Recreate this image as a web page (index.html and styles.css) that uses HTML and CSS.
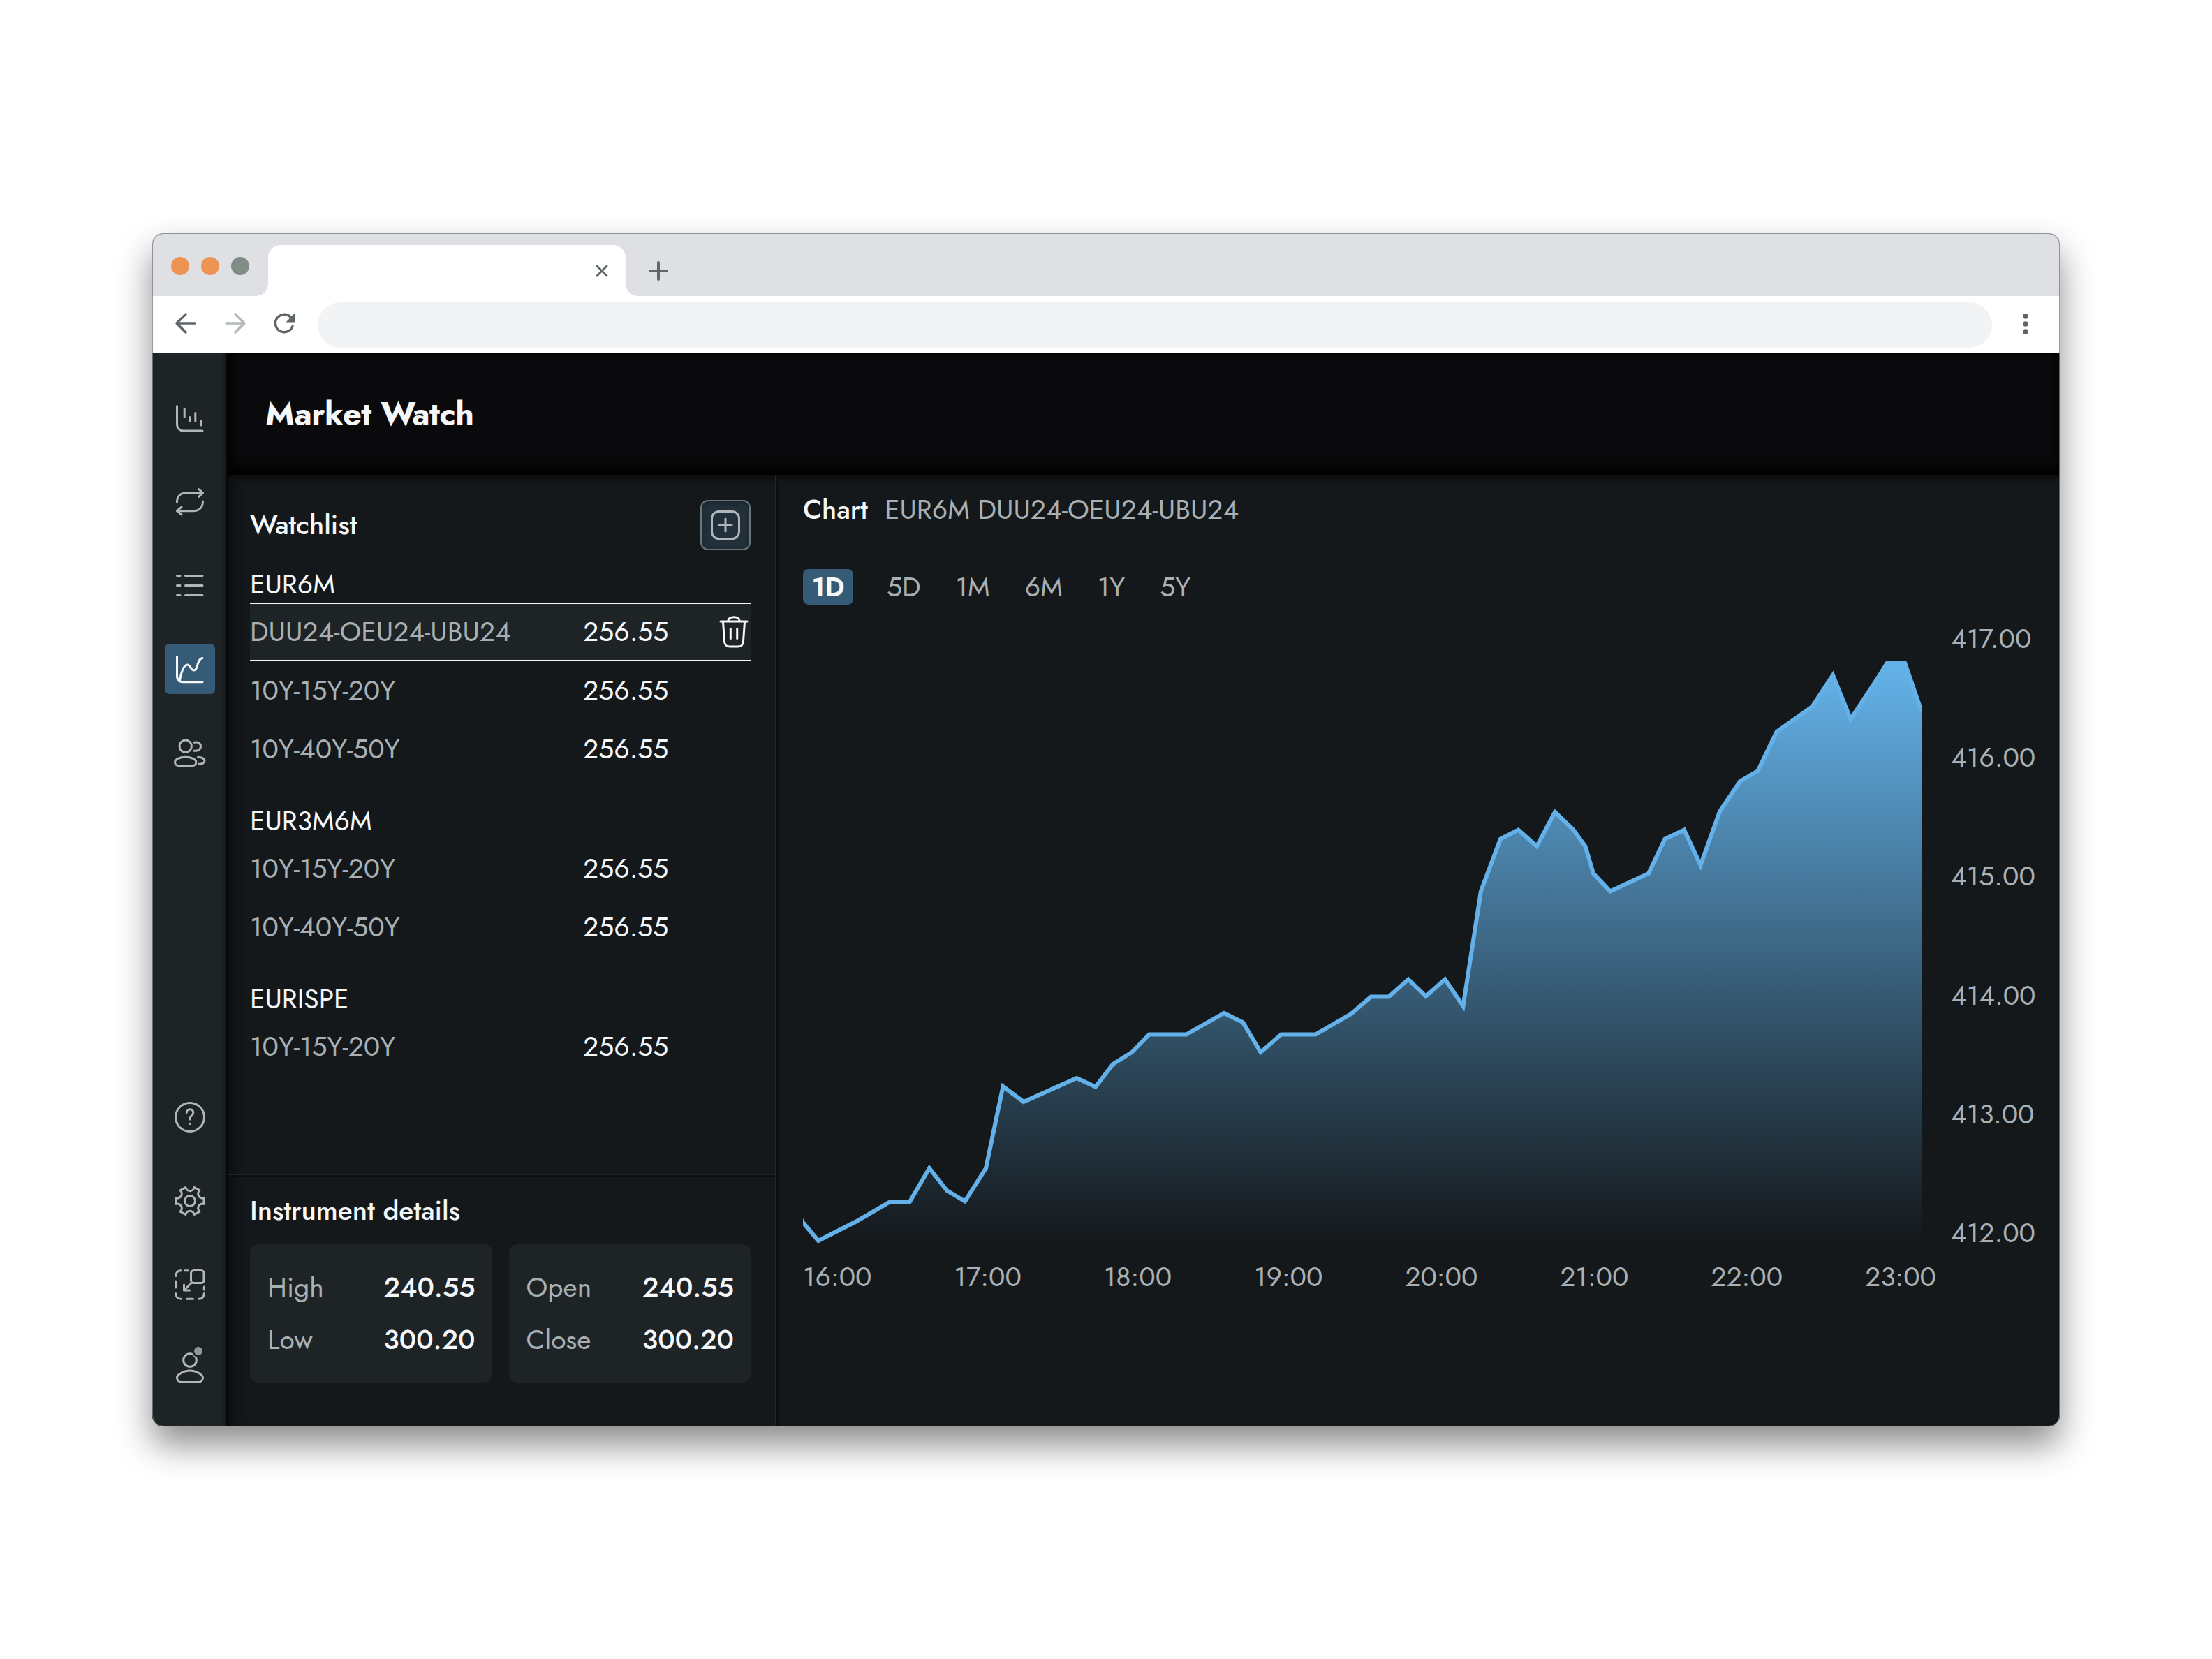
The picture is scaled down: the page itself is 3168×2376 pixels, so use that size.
FILE: index.html
```html
<!DOCTYPE html>
<html lang="en">
<head>
    <meta charset="UTF-8">
    <title>Market Watch</title>
    <link rel="stylesheet" href="styles.css">
</head>
<body>
<div class="window">
    <div class="tabstrip">
        <div class="lights"><i class="light"></i><i class="light"></i><i class="light light-grey"></i></div>
        <div class="tab">
            <svg class="tab-close" viewBox="0 0 18 18"><path d="M2 2l14 14M16 2L2 16"/></svg>
        </div>
        <svg class="tab-new" viewBox="0 0 28 28"><path d="M14 2v24M2 14h24"/></svg>
    </div>
    <div class="toolbar">
        <svg class="nav-icon" viewBox="0 0 32 32"><path d="M29 16H4M16 3L3 16l13 13"/></svg>
        <svg class="nav-icon nav-off" viewBox="0 0 32 32"><path d="M3 16h25M16 3l13 13-13 13"/></svg>
        <svg class="nav-icon" viewBox="0 0 32 32"><path d="M27 20.500a12.700 12.700 0 1 1-3-13.500l3 3"/><path class="solid" d="M30 1.500v13H17.500z"/></svg>
        <div class="omnibox"></div>
        <svg class="menu-dots" viewBox="0 0 10 32"><circle cx="5" cy="5" r="3.700"/><circle cx="5" cy="16" r="3.700"/><circle cx="5" cy="27" r="3.700"/></svg>
    </div>

    <div class="app">
        <div class="sidebar">
            <div class="side-item"><svg class="icon" viewBox="0 0 48 48"><path d="M5.500 7.500V34a9 9 0 0 0 9 9H42M16.200 11.500v12M24 23.500v6M31.800 17.500v12M40 29v6"/></svg></div>
            <div class="side-item"><svg class="icon" viewBox="0 0 48 48"><path d="M5.500 25c0-9 5.500-13.200 14-13.200h23M36.500 6.500l6 5.300-6 5.700M42.500 24c0 9-5.500 13.700-14 13.700h-23M12 32.200l-6.500 5.500L12 43"/></svg></div>
            <div class="side-item"><svg class="icon" viewBox="0 0 48 48"><path d="M5.500 10.500h4.500M17.500 10.500h24.500M5.500 24.500h4.500M17.500 24.500h24.500M5.500 38.500h4.500M17.500 38.500h24.500"/></svg></div>
            <div class="side-item side-active"><svg class="icon" viewBox="0 0 48 48"><path d="M5.500 6.500V34c0 6 3 8.700 9 8.700H42M9.500 40.500C11 30 15 18 20.500 18c4 0 5 8 9 8 6.500 0 4-16.500 12.500-17.500"/></svg></div>
            <div class="side-item"><svg class="icon" viewBox="0 0 48 48"><circle cx="17.700" cy="14.700" r="8.700"/><path d="M2.500 37.500c0-4 7-7.200 15.200-7.200s15.200 3.200 15.200 7.200c0 2.500-2 5-5 5H7.500c-3 0-5-2.500-5-5zM30 9.300c6-1 9.500 1.500 9.500 5.500s-3.500 7-9.500 6.500M35.500 30.300c5.500 0 9.500 2.500 9.500 5.200 0 3-3.500 5-8 4.700"/></svg></div>
            <div class="side-space"></div>
            <div class="side-item"><svg class="icon" viewBox="0 0 48 48"><circle cx="24" cy="24" r="20.500"/><path d="M19.300 17.500c.5-6.500 9.700-6 9.500 0 0 4.500-4.800 4-4.800 9.500"/><circle class="solid" cx="24" cy="33.500" r="1.800"/></svg></div>
            <div class="side-item"><svg class="icon" viewBox="0 0 48 48"><circle cx="24" cy="24" r="7.500"/><path d="M44 28.400A6.300 6.300 0 0 0 37.850 39.100L30.200 43.550A6.300 6.300 0 0 0 17.800 43.550L10.150 39.100A6.300 6.300 0 0 0 4 28.400V19.600A6.300 6.300 0 0 0 10.150 8.900L17.800 4.450A6.300 6.300 0 0 0 30.200 4.450L37.850 8.900A6.300 6.300 0 0 0 44 19.600z"/></svg></div>
            <div class="side-item"><svg class="icon" viewBox="0 0 48 48"><rect x="25.500" y="3.500" width="18.500" height="18" rx="4"/><path d="M26 21.500L15.500 32M15.500 24v8h8M3.700 11.500c0-5 3-7.800 7.800-7.800M16.500 3.700h5M3.700 19v9M3.700 36.500c0 5 3 7.800 7.800 7.800M19.500 44.300h9M36.500 44.300c5 0 7.800-3 7.800-7.800M44.300 27v4"/></svg></div>
            <div class="side-item"><svg class="icon" viewBox="0 0 48 48"><circle cx="24" cy="12" r="9.300"/><path d="M5.500 37c0-4 9-10 18.500-10s18.500 6 18.500 10-3 6.500-6.500 6.500H12c-3.500 0-6.500-2.500-6.500-6.500z"/><circle class="dot" cx="36" cy="-1" r="7.500"/></svg></div>
        </div>

        <div class="main">
            <div class="header">Market Watch</div>
            <div class="panels">
                <div class="left">
                    <div class="watchlist">
                        <div class="watchlist-head">
                            <div class="title">Watchlist</div>
                            <div class="btn-add"><svg class="icon" viewBox="0 0 48 48"><rect x="4.500" y="4.500" width="39" height="39" rx="10"/><path d="M24 15v18M15 24h18"/></svg></div>
                        </div>
                        <div class="group">
                            <div class="group-name">EUR6M</div>
                            <div class="row row-active">
                                <div class="row-name">DUU24-OEU24-UBU24</div>
                                <div class="row-price">256.55</div>
                                <svg class="icon trash" viewBox="0 0 48 48"><path d="M5 9h38M16 8c0-7 16-7 16 0M8.500 9.500l2 28c.4 5.500 2.500 7.500 7.500 7.500h12c5 0 7.100-2 7.500-7.500l2-28M19.300 19.500v14M28.700 19.500v14"/></svg>
                            </div>
                            <div class="row"><div class="row-name">10Y-15Y-20Y</div><div class="row-price">256.55</div></div>
                            <div class="row"><div class="row-name">10Y-40Y-50Y</div><div class="row-price">256.55</div></div>
                        </div>
                        <div class="group">
                            <div class="group-name">EUR3M6M</div>
                            <div class="row"><div class="row-name">10Y-15Y-20Y</div><div class="row-price">256.55</div></div>
                            <div class="row"><div class="row-name">10Y-40Y-50Y</div><div class="row-price">256.55</div></div>
                        </div>
                        <div class="group">
                            <div class="group-name">EURISPE</div>
                            <div class="row"><div class="row-name">10Y-15Y-20Y</div><div class="row-price">256.55</div></div>
                        </div>
                    </div>
                    <div class="details">
                        <div class="title">Instrument details</div>
                        <div class="cards">
                            <div class="card">
                                <div class="card-row"><span>High</span><b>240.55</b></div>
                                <div class="card-row"><span>Low</span><b>300.20</b></div>
                            </div>
                            <div class="card">
                                <div class="card-row"><span>Open</span><b>240.55</b></div>
                                <div class="card-row"><span>Close</span><b>300.20</b></div>
                            </div>
                        </div>
                    </div>
                </div>

                <div class="chart">
                    <div class="chart-head"><div class="title title-chart">Chart</div><div class="chart-sub">EUR6M DUU24-OEU24-UBU24</div></div>
                    <div class="ranges">
                        <div class="range range-active">1D</div>
                        <div class="range">5D</div>
                        <div class="range">1M</div>
                        <div class="range">6M</div>
                        <div class="range">1Y</div>
                        <div class="range">5Y</div>
                    </div>
                    <div class="chart-body">
                        <svg class="plot" viewBox="1150 895 1602 891">
                            <defs>
                                <linearGradient id="fill" gradientUnits="userSpaceOnUse" x1="0" y1="960" x2="0" y2="1776">
                                    <stop offset="0" stop-color="#63b1e8"/>
                                    <stop offset="1" stop-color="#63b1e8" stop-opacity="0"/>
                                </linearGradient>
                                <clipPath id="area"><rect x="1150" y="946.500" width="1602" height="840"/></clipPath>
                            </defs>
                            <g clip-path="url(#area)">
                                <path fill="url(#fill)" d="M1150 1750L1172 1777L1225 1750L1275 1721H1303L1331 1673L1356 1705L1382 1720.500L1412 1673L1436.500 1556L1466 1578L1542 1544L1569 1556.500L1594 1524L1621 1507L1646 1481.500H1699L1753 1451L1780 1464L1805.500 1507L1835 1481.500H1884L1935 1452L1963.500 1427.500H1989L2017 1402.500L2042 1427L2069.500 1402.500L2095.500 1441L2121 1276L2149 1201.500L2174.500 1188.500L2201 1212L2227 1163L2253 1188L2270.500 1212L2282 1251L2306 1276.500L2361 1251L2384.500 1201.500L2412 1188.500L2435.500 1239L2463 1162L2492 1119L2517.500 1104L2544.500 1048L2595.500 1012L2625 967L2650.500 1030L2690 970L2703 949H2729L2752 1015V1778H1150z"/>
                                <path class="plot-line" d="M1146 1744L1151 1752L1172 1777L1225 1750L1275 1721H1303L1331 1673L1356 1705L1382 1720.500L1412 1673L1436.500 1556L1466 1578L1542 1544L1569 1556.500L1594 1524L1621 1507L1646 1481.500H1699L1753 1451L1780 1464L1805.500 1507L1835 1481.500H1884L1935 1452L1963.500 1427.500H1989L2017 1402.500L2042 1427L2069.500 1402.500L2095.500 1441L2121 1276L2149 1201.500L2174.500 1188.500L2201 1212L2227 1163L2253 1188L2270.500 1212L2282 1251L2306 1276.500L2361 1251L2384.500 1201.500L2412 1188.500L2435.500 1239L2463 1162L2492 1119L2517.500 1104L2544.500 1048L2595.500 1012L2625 967L2650.500 1030L2690 970L2703 949H2728L2752 1019"/>
                            </g>
                        </svg>
                        <div class="y-axis">
                            <div>417.00</div><div>416.00</div><div>415.00</div><div>414.00</div><div>413.00</div><div>412.00</div>
                        </div>
                    </div>
                    <div class="x-axis">
                        <div>16:00</div><div>17:00</div><div>18:00</div><div>19:00</div><div>20:00</div><div>21:00</div><div>22:00</div><div>23:00</div>
                    </div>
                </div>
            </div>
        </div>
    </div>
</div>
</body>
</html>
```
FILE: styles.css
```css
* {
    box-sizing: border-box;
}
body {
    min-height: 2376px;
    margin: 0;
    padding: 334px 218px 0;
    background-color: #fff;
    font-family: Jost, Lato, sans-serif;
    font-size: 39px;
    line-height: 40px;
    color: #f5f7f9;
}
svg {
    display: block;
    flex: none;
    fill: none;
    stroke-linecap: round;
    stroke-linejoin: round;
    overflow: visible;
}

/* browser window */
.window {
    position: relative;
    width: 2732px;
    height: 1709px;
    border-radius: 16px;
    overflow: hidden;
    background-color: #14181b;
    box-shadow: 0 26px 50px rgba(0, 0, 0, .46);
}
/* hairline round the whole window */
.window:after {
    content: "";
    position: absolute;
    top: 0;
    right: 0;
    bottom: 0;
    left: 0;
    border: 1px solid rgba(120, 128, 132, .8);
    border-radius: 16px;
}
.tabstrip {
    display: flex;
    height: 90px;
    background-color: #dfe0e4;
}
.lights {
    display: flex;
    gap: 17px;
    width: 166px;
    padding: 34px 0 0 27px;
}
.light {
    width: 26px;
    height: 26px;
    border-radius: 50%;
    background-color: #ed9455;
}
.light-grey {
    background-color: #808c86;
}
.tab {
    position: relative;
    display: flex;
    align-items: center;
    justify-content: flex-end;
    width: 512px;
    height: 73px;
    margin-top: 17px;
    padding-right: 25px;
    border-radius: 18px 18px 0 0;
    background-color: #fff;
}
/* flared feet of the tab */
.tab:before, .tab:after {
    content: "";
    position: absolute;
    bottom: 0;
    width: 17px;
    height: 17px;
}
.tab:before {
    left: -17px;
    background: radial-gradient(circle at 0 0, transparent 16.500px, #fff 17px);
}
.tab:after {
    right: -17px;
    background: radial-gradient(circle at 100% 0, transparent 16.500px, #fff 17px);
}
.tab-close {
    width: 18px;
    height: 18px;
    stroke: #5f6669;
    stroke-width: 3;
}
.tab-new {
    width: 28px;
    height: 28px;
    margin: 40px 0 0 33px;
    stroke: #5f6669;
    stroke-width: 4;
}
.toolbar {
    display: flex;
    align-items: center;
    height: 82px;
    padding-left: 32px;
    background-color: #fff;
}
.nav-icon {
    width: 32px;
    height: 32px;
    margin: -4px 39px 0 0;
    stroke: #5f6669;
    stroke-width: 3.500;
}
.nav-off {
    stroke: #b3b9bd;
}
.nav-icon .solid {
    fill: #5f6669;
    stroke: none;
}
.omnibox {
    width: 2398px;
    height: 65px;
    margin-left: -8px;
    border-radius: 33px;
    background-color: #f2f3f5;
}
.menu-dots {
    width: 10px;
    height: 32px;
    margin: -2px 0 0 43px;
    fill: #5f6669;
}

/* sidebar */
.app {
    display: flex;
    height: 1537px;
}
.sidebar {
    display: flex;
    flex-direction: column;
    gap: 48px;
    width: 106px;
    padding: 56px 0 47px 18px;
    background: linear-gradient(90deg, #1e2326 94%, #14181b);
}
.side-item {
    display: flex;
    align-items: center;
    justify-content: center;
    width: 72px;
    height: 72px;
    border-radius: 7px;
}
.side-space {
    flex: 1;
}
.icon {
    width: 48px;
    height: 48px;
    stroke: #b0b6b9;
    stroke-width: 3;
}
.icon .solid {
    fill: #a9b0b3;
    stroke: none;
}
.icon .dot {
    fill: #909799;
    stroke: #1e2326;
    stroke-width: 3;
}
.side-active {
    background-color: #355b76;
}
.side-active .icon {
    stroke: #f5f7f9;
}

/* main area */
.main {
    flex: 1;
    display: flex;
    flex-direction: column;
    border-left: 3px solid #060708;
}
.header {
    height: 174px;
    padding-left: 53px;
    font-size: 47px;
    font-weight: 700;
    letter-spacing: -.5px;
    line-height: 174px;
    background-color: #0a0a0c;
    box-shadow: inset 0 -16px 12px -4px #020202, inset 10px 0 12px -4px #040404, inset -6px 0 8px -4px #030303;
}
.panels {
    flex: 1;
    display: flex;
    box-shadow: inset 0 12px 12px -8px #0a0b0c, inset 18px 0 14px -8px #0e1012;
}
.left {
    display: flex;
    flex-direction: column;
    width: 785px;
    border-right: 2px solid #202528;
}
.watchlist {
    height: 1003px;
    padding: 36px 35px 0 31px;
    border-bottom: 2px solid #202528;
}
.watchlist-head {
    display: flex;
    align-items: center;
    justify-content: space-between;
    height: 72px;
    margin-bottom: 23px;
}
.title {
    font-weight: 500;
}
.btn-add {
    display: flex;
    align-items: center;
    justify-content: center;
    width: 72px;
    height: 72px;
    border: 2px solid #6b7478;
    border-radius: 11px;
    background-color: #22303b;
    box-shadow: inset 0 2px 6px #1a2329;
}
.group {
    margin-bottom: 35px;
}
.group-name {
    height: 52px;
    line-height: 52px;
}
.row {
    display: flex;
    align-items: center;
    height: 84px;
}
.row-active {
    border-top: 2px solid #f5f7f9;
    border-bottom: 2px solid #f5f7f9;
    background-color: #1e2326;
}
.row-name {
    flex: none;
    width: 477px;
    color: #a9b0b3;
}
.row-price {
    flex: none;
    width: 125px;
}
.trash {
    margin-left: 67px;
    stroke: #f5f7f9;
}
.details {
    flex: 1;
    padding: 29px 35px 0 31px;
    border-top: 2px solid #0b0d0e;
}
.cards {
    display: flex;
    gap: 24px;
    margin-top: 28px;
}
.card {
    flex: 1;
    height: 198px;
    padding: 24px 24px 24px 25px;
    border-radius: 12px;
    background-color: #1e2326;
}
.card-row {
    display: flex;
    align-items: center;
    justify-content: space-between;
    height: 75px;
    color: #a9b0b3;
}
.card-row b {
    font-weight: 500;
    color: #f5f7f9;
}

/* chart */
.chart {
    flex: 1;
    padding: 30px 0 0 35px;
    border-left: 3px solid #0c0e0f;
    color: #a9b0b3;
}
.chart-head {
    display: flex;
    gap: 24px;
}
.title-chart {
    width: 93px;
    color: #f5f7f9;
}
.ranges {
    display: flex;
    gap: 50px;
    margin-top: 65px;
    line-height: 51px;
}
.range-active {
    width: 72px;
    margin-right: -2px;
    border-radius: 8px;
    background-color: #355b76;
    font-weight: 600;
    text-align: center;
    color: #f5f7f9;
}
.chart-body {
    display: flex;
    height: 891px;
    margin-top: 29px;
}
.plot {
    width: 1602px;
    height: 891px;
}
.plot-line {
    stroke: #63b1e8;
    stroke-width: 6;
    stroke-linejoin: miter;
    stroke-linecap: butt;
}
.y-axis {
    display: flex;
    flex-direction: column;
    justify-content: space-between;
    margin-left: 42px;
}
.x-axis {
    display: flex;
    justify-content: space-between;
    width: 1623px;
    margin-top: 23px;
}
```
